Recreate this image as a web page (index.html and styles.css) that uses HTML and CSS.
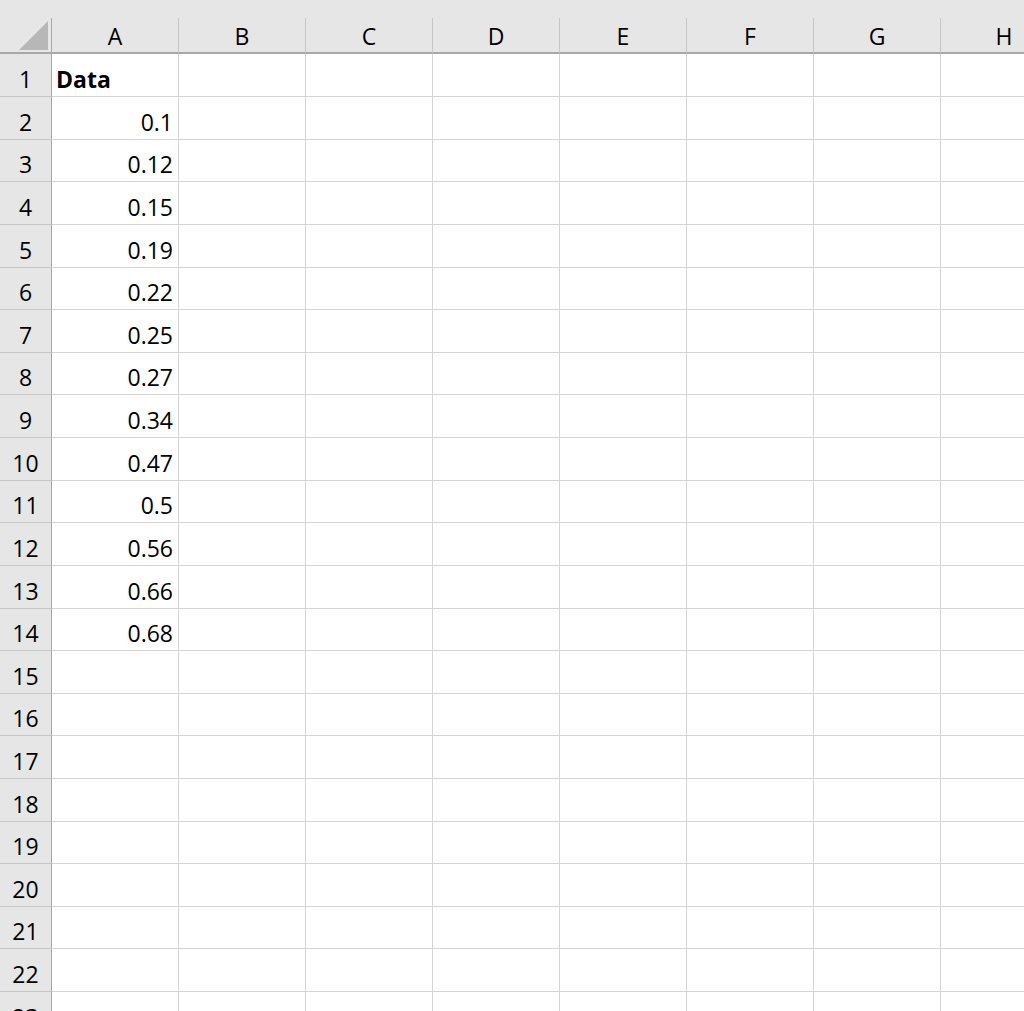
FILE: index.html
```html
<!DOCTYPE html>
<html>
<head>
<meta charset="utf-8">
<link rel="stylesheet" href="styles.css">
</head>
<body>
<div class="sheet">
  <div class="topband"></div>
  <div class="colhead">
    <div class="corner"><div class="tri"></div></div>
    <div class="ch">A</div><div class="ch">B</div><div class="ch">C</div><div class="ch">D</div>
    <div class="ch">E</div><div class="ch">F</div><div class="ch">G</div><div class="ch">H</div>
  </div>
  <div class="grid" id="grid"></div>
</div>
<script>
(function(){
  var data = {1:"Data",2:"0.1",3:"0.12",4:"0.15",5:"0.19",6:"0.22",7:"0.25",8:"0.27",9:"0.34",10:"0.47",11:"0.5",12:"0.56",13:"0.66",14:"0.68"};
  var g = document.getElementById('grid');
  var html = '';
  for (var r = 1; r <= 23; r++) {
    html += '<div class="rh">' + r + '</div>';
    for (var c = 0; c < 8; c++) {
      var v = (c === 0 && data[r]) ? data[r] : '';
      var cls = 'cell';
      if (c === 0 && r === 1) cls += ' bold';
      else if (c === 0 && v) cls += ' num';
      html += '<div class="' + cls + '">' + v + '</div>';
    }
  }
  g.innerHTML = html;
})();
</script>
</body>
</html>
```
FILE: styles.css
```css
html, body {
  margin: 0;
  padding: 0;
  background: #ffffff;
  overflow: hidden;
  width: 1024px;
  height: 1011px;
}
.sheet {
  font-family: "Open Sans", "Noto Sans", sans-serif;
  font-size: 23px;
  line-height: normal;
  color: #000;
  width: 1024px;
  overflow: hidden;
}
.topband {
  height: 18px;
  background: #e6e6e6;
}
.colhead {
  display: grid;
  grid-template-columns: 52px repeat(8, 127px);
  height: 36px;
  background: #e6e6e6;
}
.corner {
  position: relative;
  border-right: 1px solid #a8a8a8;
  border-bottom: 2px solid #a8a8a8;
  box-sizing: border-box;
}
.tri {
  position: absolute;
  right: 3px;
  bottom: 2px;
  width: 0;
  height: 0;
  border-left: 29px solid transparent;
  border-bottom: 29px solid #b7b7b7;
}
.ch {
  box-sizing: border-box;
  border-right: 1px solid #c6c6c6;
  border-bottom: 2px solid #a8a8a8;
  display: flex;
  align-items: flex-end;
  justify-content: center;
  padding-bottom: 0;
}
.grid {
  display: grid;
  grid-template-columns: 52px repeat(8, 127px);
  grid-template-rows: 43px 43px 42px 43px 43px 42px 43px 42px 43px 43px 42px 43px 43px 42px 43px 42px 43px 43px 42px 43px 42px 43px 43px;
}
.rh {
  box-sizing: border-box;
  background: #e6e6e6;
  border-right: 1px solid #a8a8a8;
  border-bottom: 1px solid #c6c6c6;
  display: flex;
  align-items: flex-end;
  justify-content: center;
  padding-bottom: 1px;
}
.cell {
  box-sizing: border-box;
  border-right: 1px solid #d4d4d4;
  border-bottom: 1px solid #d4d4d4;
  display: flex;
  align-items: flex-end;
  padding: 0 5px 1px 4px;
  white-space: nowrap;
}
.cell.num {
  justify-content: flex-end;
}
.cell.bold {
  font-weight: bold;
}
```
